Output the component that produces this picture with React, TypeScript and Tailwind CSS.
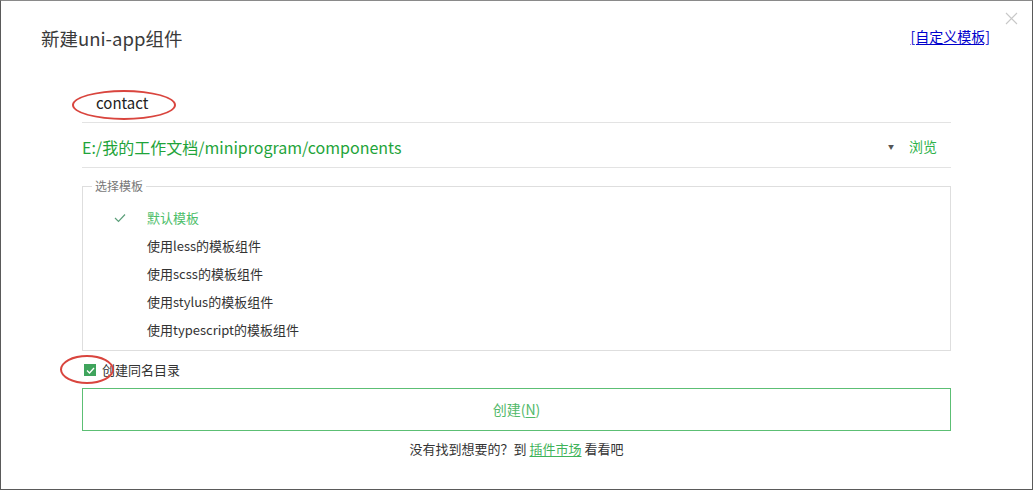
const font = { fontFamily: '"Noto Sans CJK SC", "Noto Sans", sans-serif' };

const templates = [
  { label: '默认模板', active: true },
  { label: '使用less的模板组件' },
  { label: '使用scss的模板组件' },
  { label: '使用stylus的模板组件' },
  { label: '使用typescript的模板组件' },
];

export default function App() {
  return (
    <div
      className="relative w-[1033px] h-[490px] bg-white border border-[#5a5a5a] border-t-[#8a8a8a] overflow-hidden text-[#333]"
      style={font}
    >
      {/* close */}
      <svg className="absolute right-[14px] top-[11px]" width="13" height="13" viewBox="0 0 13 13">
        <path d="M1 1L12 12M12 1L1 12" stroke="#c8c8c8" strokeWidth="1.1" />
      </svg>

      <div className="flex items-center justify-between pl-[40px] pr-[42px] pt-[24px]">
        <h1 className="text-[18.5px] leading-[26px] text-[#3a3a3a]">新建uni-app组件</h1>
        <a className="text-[14px] text-[#0000cc] underline underline-offset-2 -mt-[4px]">[自定义模板]</a>
      </div>

      <div className="mx-[81px] mt-[52px] flex flex-col">
        {/* name input */}
        <div className="relative h-[35px] border-b border-[#e3e3e3] flex items-center pl-[14px] pb-[3px] -mt-[15px]">
          <span className="text-[15px] text-[#222]">contact</span>
          <div className="absolute left-[-10px] top-[2px] w-[104px] h-[30px] rounded-[50%] border-2 border-[#d9453e]" />
        </div>

        {/* path */}
        <div className="h-[45px] border-b border-[#e3e3e3] flex items-center pt-[3px]">
          <span className="flex-1 text-[16px] text-[#1fa43a]">E:/我的工作文档/miniprogram/components</span>
          <span className="text-[6px] text-[#555] mr-[15px]">▼</span>
          <span className="text-[14px] text-[#2fb24a] mr-[14px]">浏览</span>
        </div>

        {/* fieldset */}
        <fieldset className="mt-[11px] border border-[#dedede] h-[172px] pl-[9px] pr-0 pt-[11px] pb-0">
          <legend className="text-[12px] text-[#777] px-[3px] leading-[14px]">选择模板</legend>
          <div className="flex flex-col">
            {templates.map((t) => (
              <div key={t.label} className="h-[28px] flex items-center">
                <span className="w-[55px] flex justify-center">
                  {t.active && (
                    <svg width="12" height="10" viewBox="0 0 12 10">
                      <path d="M1 5L4.5 8.5L11 1.5" fill="none" stroke="#5c9f7a" strokeWidth="1.2" />
                    </svg>
                  )}
                </span>
                <span className={t.active ? 'text-[13px] text-[#4dbe6a]' : 'text-[13px] text-[#333]'}>
                  {t.label}
                </span>
              </div>
            ))}
          </div>
        </fieldset>

        {/* checkbox */}
        <div className="relative mt-[9px] h-[20px] flex items-center gap-[6px] pl-[2px]">
          <span className="w-[12px] h-[12px] bg-[#3fa45c] flex items-center justify-center">
            <svg width="9" height="7" viewBox="0 0 9 7">
              <path d="M1 3.5L3.5 6L8 1" fill="none" stroke="#fff" strokeWidth="1.3" />
            </svg>
          </span>
          <span className="text-[13px] text-[#333]">创建同名目录</span>
          <div className="absolute left-[-22px] top-[-5px] w-[54px] h-[29px] rounded-[50%] border-2 border-[#d9453e]" />
        </div>

        {/* create button */}
        <button className="mt-[8px] h-[43px] border border-[#5cbf74] flex items-center justify-center text-[14px] text-[#52b96a]">
          创建(<span className="underline underline-offset-2">N</span>)
        </button>

        <p className="mt-[8px] text-center text-[13px] text-[#333]">
          没有找到想要的？到 <a className="text-[#3fb35a] underline underline-offset-2">插件市场</a> 看看吧
        </p>
      </div>
    </div>
  );
}
